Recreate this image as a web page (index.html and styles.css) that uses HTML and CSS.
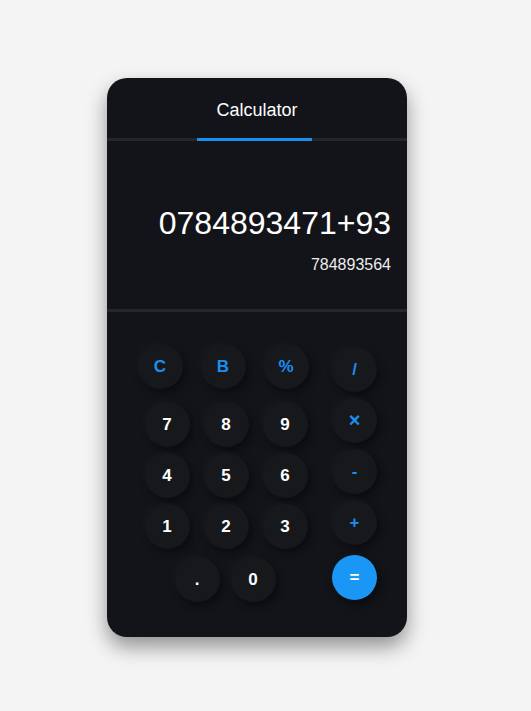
FILE: index.html
```html
<!DOCTYPE html>
<html>
<head>
<meta charset="utf-8">
<title>Calculator</title>
<link rel="stylesheet" href="styles.css">
</head>
<body>
<div class="page">
  <div class="card">
    <div class="header">Calculator</div>
    <div class="tabline"><div class="tab-active"></div></div>
    <div class="display">
      <div class="expr">0784893471+93</div>
      <div class="result">784893564</div>
    </div>
    <div class="sep"></div>
    <div class="keypad">
      <div class="digits">
        <div class="row row-top">
          <button class="key op">C</button>
          <button class="key op">B</button>
          <button class="key op">%</button>
        </div>
        <div class="row">
          <button class="key">7</button>
          <button class="key">8</button>
          <button class="key">9</button>
        </div>
        <div class="row">
          <button class="key">4</button>
          <button class="key">5</button>
          <button class="key">6</button>
        </div>
        <div class="row">
          <button class="key">1</button>
          <button class="key">2</button>
          <button class="key">3</button>
        </div>
        <div class="row row-last">
          <button class="key">.</button>
          <button class="key">0</button>
        </div>
      </div>
      <div class="ops">
        <button class="key op">/</button>
        <button class="key op times">×</button>
        <button class="key op">-</button>
        <button class="key op">+</button>
        <button class="key equals">=</button>
      </div>
    </div>
  </div>
</div>
</body>
</html>
```

FILE: styles.css
```css
* { box-sizing: border-box; }
html, body { margin: 0; padding: 0; }
html { background: #f4f4f4; }
body {
  background: #f4f4f4;
  font-family: "Liberation Sans", Arial, sans-serif;
  min-height: 711px;
}
.page {
  padding: 78px 0 60px 107px;
}
.card {
  width: 300px;
  height: 559px;
  background: #131419;
  border-radius: 20px;
  box-shadow: 0 10px 20px rgba(0, 0, 0, 0.4);
  overflow: hidden;
}
.header {
  height: 60px;
  display: flex;
  align-items: center;
  justify-content: center;
  color: #ffffff;
  font-size: 18px;
  padding-top: 4px;
}
.tabline {
  height: 3px;
  background: #24262b;
}
.tab-active {
  margin-left: 90px;
  width: 115px;
  height: 3px;
  background: #1a8ff0;
}
.display {
  height: 168px;
  padding: 62px 16px 0 0;
  text-align: right;
  color: #ffffff;
}
.expr {
  font-size: 32px;
  line-height: 40px;
}
.result {
  margin-top: 12px;
  font-size: 16px;
  line-height: 20px;
  color: #ececec;
}
.sep {
  height: 3px;
  background: #24262b;
}
.keypad {
  display: flex;
  padding-top: 32px;
}
.digits {
  width: 200px;
  margin-left: 19px;
  display: flex;
  flex-direction: column;
  gap: 6px;
}
.row {
  display: flex;
  justify-content: center;
  gap: 14px;
}
.row-top {
  gap: 18px;
  padding-right: 6px;
  margin-bottom: 7px;
}
.row-last {
  gap: 11px;
  margin-top: 2px;
  padding-right: 2px;
}
.ops {
  margin-left: 6px;
  padding-top: 3px;
  display: flex;
  flex-direction: column;
  gap: 6px;
}
.key {
  width: 45px;
  height: 45px;
  border-radius: 50%;
  border: none;
  padding: 0;
  background: #16181c;
  color: #ffffff;
  font-family: "Liberation Sans", Arial, sans-serif;
  font-weight: bold;
  font-size: 17px;
  display: flex;
  align-items: center;
  justify-content: center;
  box-shadow: 3px 4px 8px rgba(0, 0, 0, 0.45), -3px -3px 7px rgba(255, 255, 255, 0.025);
}
.key.op {
  color: #1a8ff0;
}
.key.times {
  font-size: 20px;
}
.equals {
  margin-top: 4px;
  background: #1a96f5;
  color: #ffffff;
  box-shadow: 3px 4px 8px rgba(0, 0, 0, 0.5);
}
```
